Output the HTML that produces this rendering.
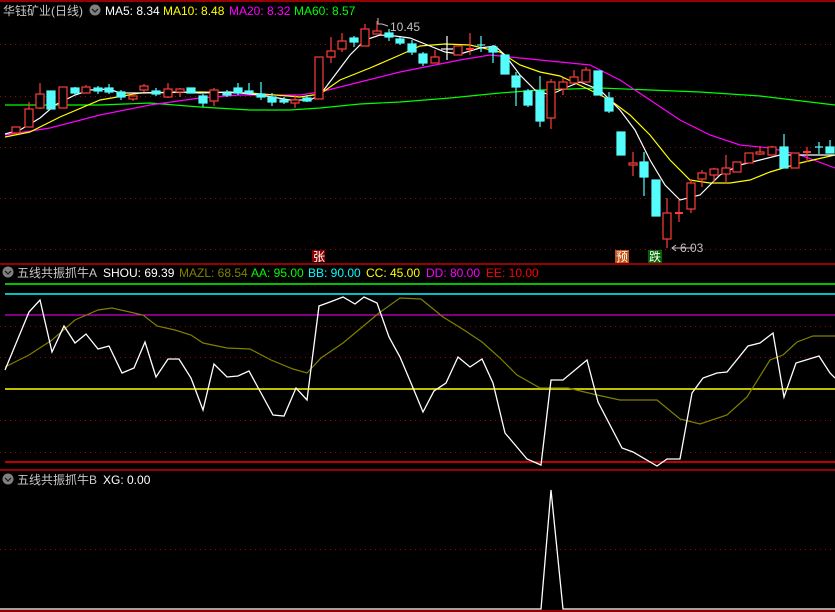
<!DOCTYPE html>
<html><head><meta charset="utf-8"><style>
html,body{margin:0;padding:0;background:#000;width:835px;height:612px;overflow:hidden}
svg{display:block}
text{font-family:"Liberation Sans","Noto Sans CJK SC",sans-serif;font-size:12px}
</style></head><body>
<svg width="835" height="612" viewBox="0 0 835 612" xmlns="http://www.w3.org/2000/svg">
<rect width="835" height="612" fill="#000"/>
<!-- borders -->
<g stroke="#c80000" stroke-width="1.5">
<line x1="0" y1="1" x2="835" y2="1"/>
<line x1="0" y1="264" x2="835" y2="264"/>
<line x1="0" y1="470" x2="835" y2="470"/>
<line x1="0" y1="611" x2="835" y2="611"/>
</g>
<!-- dotted grid -->
<g stroke="#a00000" stroke-width="1" stroke-dasharray="1,4">
<line x1="0" y1="44.5" x2="835" y2="44.5"/>
<line x1="0" y1="96.5" x2="835" y2="96.5"/>
<line x1="0" y1="147.5" x2="835" y2="147.5"/>
<line x1="0" y1="198.5" x2="835" y2="198.5"/>
<line x1="0" y1="249.5" x2="835" y2="249.5"/>
<line x1="0" y1="326.5" x2="835" y2="326.5"/>
<line x1="0" y1="357.5" x2="835" y2="357.5"/>
<line x1="0" y1="420.5" x2="835" y2="420.5"/>
<line x1="0" y1="452.5" x2="835" y2="452.5"/>
<line x1="0" y1="549.5" x2="835" y2="549.5"/>
</g>
<!-- MA lines -->
<g fill="none" stroke-width="1.2">
<polyline stroke="#00ff00" points="5,105 100,105 150,103 200,107 250,110 290,110 320,108 360,104 400,102 450,98 500,93 540,90 600,88 650,90 700,92 760,96 835,105"/>
<polyline stroke="#ff00ff" points="5,135 50,128 100,115 150,105 200,98 240,95 300,95 320,92 360,82 400,72 430,66 460,60 490,55 520,58 560,62 590,65 620,80 650,100 680,120 710,135 740,145 770,148 800,155 835,168"/>
<polyline stroke="#ffff00" points="5,137 30,132 60,117 100,100 140,93 200,92 250,93 300,97 320,94 340,80 370,68 400,55 420,46 445,44 470,45 500,52 520,65 540,72 560,76 590,90 610,100 630,115 650,135 670,160 690,180 710,183 730,183 750,180 770,172 800,163 835,155"/>
<polyline stroke="#ffffff" points="5,134 20,130 40,118 55,105 75,95 90,90 109,89 120,93 140,93 180,92 200,93 230,92 260,95 290,100 310,100 320,95 335,75 350,55 365,40 380,35 395,36 410,38 425,44 445,52 460,54 480,48 495,46 505,55 520,75 535,90 550,95 565,88 580,82 600,90 620,110 635,130 650,160 665,185 680,200 700,195 720,175 740,165 760,160 780,155 800,155 835,155"/>
</g>
<!-- red candles -->
<g stroke="#ff3c3c" fill="#000" stroke-width="1.2">
<line x1="16" y1="127" x2="16" y2="134"/><rect x="12" y="127" width="8" height="6"/>
<line x1="29" y1="102" x2="29" y2="127"/><rect x="25" y="109" width="8" height="18"/>
<line x1="40" y1="83" x2="40" y2="109"/><rect x="36" y="94" width="8" height="14"/>
<line x1="63" y1="87" x2="63" y2="108"/><rect x="59" y="87" width="8" height="21"/>
<line x1="86" y1="85" x2="86" y2="93"/><rect x="82" y="87" width="8" height="6"/>
<line x1="133" y1="94" x2="133" y2="101"/><rect x="129" y="96" width="8" height="3"/>
<line x1="144" y1="84" x2="144" y2="92"/><rect x="140" y="86" width="8" height="4"/>
<line x1="168" y1="83" x2="168" y2="98"/><rect x="164" y="89" width="8" height="8"/>
<line x1="180" y1="88" x2="180" y2="97"/><rect x="176" y="89" width="8" height="3"/>
<line x1="214" y1="88" x2="214" y2="106"/><rect x="210" y="90" width="8" height="11"/>
<line x1="295" y1="95" x2="295" y2="108"/><rect x="291" y="100" width="8" height="3"/>
<rect x="315" y="57" width="8" height="42"/>
<line x1="331" y1="37" x2="331" y2="63"/><rect x="327" y="51" width="8" height="6"/>
<line x1="342" y1="33" x2="342" y2="52"/><rect x="338" y="41" width="8" height="8"/>
<line x1="365" y1="24" x2="365" y2="46"/><rect x="361" y="29" width="8" height="17"/>
<line x1="377" y1="21" x2="377" y2="34"/><rect x="373" y="31" width="8" height="3"/>
<line x1="435" y1="50" x2="435" y2="63"/><rect x="431" y="57" width="8" height="6"/>
<rect x="454" y="46" width="8" height="9"/>
<line x1="470" y1="33" x2="470" y2="55"/><line x1="466" y1="49" x2="474" y2="49" stroke-width="2"/>
<line x1="551" y1="79" x2="551" y2="129"/><rect x="547" y="82" width="8" height="36"/>
<line x1="563" y1="78" x2="563" y2="95"/><rect x="559" y="82" width="8" height="7"/>
<line x1="574" y1="70" x2="574" y2="83"/><rect x="570" y="77" width="8" height="6"/>
<line x1="586" y1="67" x2="586" y2="82"/><rect x="582" y="70" width="8" height="12"/>
<line x1="633" y1="152" x2="633" y2="176"/><rect x="629" y="163" width="8" height="2"/>
<line x1="667" y1="198" x2="667" y2="248"/><rect x="663" y="213" width="8" height="26"/>
<line x1="679" y1="200" x2="679" y2="222"/><line x1="675" y1="213" x2="683" y2="213" stroke-width="2"/>
<line x1="691" y1="180" x2="691" y2="213"/><rect x="687" y="183" width="8" height="26"/>
<line x1="702" y1="170" x2="702" y2="187"/><rect x="698" y="173" width="8" height="6"/>
<line x1="714" y1="168" x2="714" y2="183"/><rect x="710" y="169" width="8" height="6"/>
<line x1="726" y1="155" x2="726" y2="183"/><rect x="722" y="168" width="8" height="6"/>
<rect x="733" y="162" width="8" height="10"/>
<rect x="745" y="153" width="8" height="10"/>
<line x1="760" y1="146" x2="760" y2="155"/><rect x="756" y="152" width="8" height="2"/>
<line x1="772" y1="146" x2="772" y2="155"/><rect x="768" y="147" width="8" height="8"/>
<rect x="791" y="153" width="8" height="15"/>
<line x1="807" y1="147" x2="807" y2="162"/><line x1="803" y1="152" x2="811" y2="152" stroke-width="2"/>
</g>
<!-- cyan candles -->
<g stroke="#54fcfc" fill="#54fcfc" stroke-width="1.2">
<rect x="47" y="91" width="8" height="18"/>
<line x1="75" y1="87" x2="75" y2="95"/><rect x="71" y="88" width="8" height="5"/>
<line x1="98" y1="86" x2="98" y2="94"/><rect x="94" y="88" width="8" height="3"/>
<line x1="109" y1="84" x2="109" y2="94"/><rect x="105" y="88" width="8" height="4"/>
<line x1="121" y1="90" x2="121" y2="100"/><rect x="117" y="92" width="8" height="5"/>
<line x1="156" y1="88" x2="156" y2="96"/><rect x="152" y="91" width="8" height="3"/>
<rect x="187" y="88" width="8" height="5"/>
<line x1="203" y1="94" x2="203" y2="107"/><rect x="199" y="96" width="8" height="7"/>
<line x1="227" y1="90" x2="227" y2="97"/><rect x="223" y="93" width="8" height="2"/>
<line x1="238" y1="83" x2="238" y2="95"/><rect x="234" y="88" width="8" height="5"/>
<line x1="249" y1="83" x2="249" y2="94"/><rect x="245" y="91" width="8" height="2"/>
<line x1="261" y1="82" x2="261" y2="100"/><rect x="257" y="94" width="8" height="3"/>
<line x1="272" y1="93" x2="272" y2="106"/><rect x="268" y="97" width="8" height="5"/>
<line x1="284" y1="97" x2="284" y2="104"/><rect x="280" y="100" width="8" height="2"/>
<line x1="307" y1="95" x2="307" y2="102"/><rect x="303" y="98" width="8" height="3"/>
<line x1="354" y1="36" x2="354" y2="47"/><rect x="350" y="38" width="8" height="4"/>
<line x1="389" y1="29" x2="389" y2="41"/><rect x="385" y="33" width="8" height="4"/>
<line x1="400" y1="37" x2="400" y2="45"/><rect x="396" y="39" width="8" height="4"/>
<line x1="412" y1="40" x2="412" y2="55"/><rect x="408" y="44" width="8" height="8"/>
<line x1="423" y1="52" x2="423" y2="66"/><rect x="419" y="54" width="8" height="9"/>
<line x1="481" y1="36" x2="481" y2="52"/><line x1="477" y1="45" x2="485" y2="45"/>
<line x1="493" y1="45" x2="493" y2="63"/><rect x="489" y="47" width="8" height="5"/>
<rect x="501" y="55" width="8" height="19"/>
<line x1="516" y1="72" x2="516" y2="106"/><rect x="512" y="76" width="8" height="11"/>
<line x1="528" y1="89" x2="528" y2="107"/><rect x="524" y="91" width="8" height="14"/>
<line x1="540" y1="76" x2="540" y2="127"/><rect x="536" y="91" width="8" height="30"/>
<rect x="594" y="71" width="8" height="24"/>
<line x1="609" y1="92" x2="609" y2="113"/><rect x="605" y="98" width="8" height="13"/>
<rect x="617" y="132" width="8" height="23"/>
<line x1="644" y1="152" x2="644" y2="196"/><rect x="640" y="162" width="8" height="15"/>
<rect x="652" y="180" width="8" height="36"/>
<line x1="784" y1="134" x2="784" y2="168"/><rect x="780" y="147" width="8" height="21"/>
<line x1="819" y1="142" x2="819" y2="154"/><line x1="815" y1="147" x2="823" y2="147"/>
<line x1="830" y1="140" x2="830" y2="153"/><rect x="826" y="147" width="8" height="6"/>
</g>
<g stroke="#fff" stroke-width="1.2"><line x1="447" y1="36" x2="447" y2="60"/><line x1="441" y1="49" x2="453" y2="49"/></g>
<!-- price labels -->
<g stroke="#c0c0c0" fill="none" stroke-width="1"><polyline points="378,18 378,24 382,24 388,26"/><polyline points="694,248 672,248"/><polyline points="676,245 672,248 676,251"/></g>
<text x="390" y="31" fill="#c0c0c0">10.45</text>
<text x="680" y="252" fill="#c0c0c0">6.03</text>
<!-- markers -->
<rect x="312" y="250" width="13" height="12" fill="#8c0000"/><text x="313" y="261" fill="#fff" font-size="11">张</text>
<rect x="615" y="250" width="14" height="13" fill="#c05010"/><text x="616" y="261" fill="#fff" font-size="11">预</text>
<rect x="648" y="250" width="14" height="13" fill="#006400"/><text x="649" y="261" fill="#fff" font-size="11">跌</text>
<!-- header 1 -->
<text x="3" y="15" fill="#c8c8c8" font-size="13">华钰矿业(日线)</text>
<circle cx="95" cy="10" r="5.5" fill="#808080"/><polyline points="92,9 95,12 98,9" stroke="#222" fill="none" stroke-width="1.3"/>
<text x="105" y="15" fill="#fff">MA5: 8.34</text>
<text x="163" y="15" fill="#ffff00">MA10: 8.48</text>
<text x="229" y="15" fill="#ff00ff">MA20: 8.32</text>
<text x="294" y="15" fill="#00ff00">MA60: 8.57</text>
<!-- panel 2 -->
<g stroke-width="1.5">
<line x1="5" y1="284" x2="835" y2="284" stroke="#00ff00"/>
<line x1="5" y1="294" x2="835" y2="294" stroke="#00ffff"/>
<line x1="5" y1="315" x2="835" y2="315" stroke="#ff00ff" stroke-width="1"/>
<line x1="5" y1="389" x2="835" y2="389" stroke="#ffff00"/>
<line x1="5" y1="462" x2="835" y2="462" stroke="#ff0000"/>
</g>
<polyline fill="none" stroke="#808000" stroke-width="1.2" points="5,367 29,355 52,340 75,320 98,310 112,308 143,315 157,326 175,330 191,335 203,343 227,348 250,349 271,360 293,369 307,373 321,358 343,343 361,328 379,313 400,298 421,299 443,317 464,330 482,342 500,358 517,375 540,388 568,388 597,395 620,400 657,400 680,419 700,424 727,415 747,397 770,360 783,355 797,342 813,336 835,336"/>
<polyline fill="none" stroke="#fff" stroke-width="1.3" points="5,370 29,312 40,300 52,352 64,326 75,343 86,334 98,349 109,346 122,373 134,368 145,342 156,377 168,359 179,359 191,378 203,410 214,364 227,377 238,376 249,371 261,393 273,415 284,416 296,388 307,400 319,306 330,302 343,297 355,304 364,297 377,303 389,337 400,357 411,383 423,412 434,391 446,383 458,357 470,367 482,359 493,383 505,433 527,459 541,465 551,380 563,380 587,360 598,402 622,448 633,452 657,466 667,459 680,459 692,393 703,378 717,373 727,372 748,346 760,343 773,333 784,397 796,363 819,356 830,373 835,378"/>
<circle cx="8" cy="272" r="5.5" fill="#808080"/><polyline points="5,271 8,274 11,271" stroke="#222" fill="none" stroke-width="1.3"/>
<text x="17" y="277" fill="#c8c8c8">五线共振抓牛A</text>
<text x="103" y="277" fill="#fff">SHOU: 69.39</text>
<text x="179" y="277" fill="#808000">MAZL: 68.54</text>
<text x="251" y="277" fill="#00ff00">AA: 95.00</text>
<text x="308" y="277" fill="#00ffff">BB: 90.00</text>
<text x="366" y="277" fill="#ffff00">CC: 45.00</text>
<text x="426" y="277" fill="#ff00ff">DD: 80.00</text>
<text x="486" y="277" fill="#ff0000">EE: 10.00</text>
<!-- panel 3 -->
<circle cx="8" cy="479" r="5.5" fill="#808080"/><polyline points="5,478 8,481 11,478" stroke="#222" fill="none" stroke-width="1.3"/>
<text x="17" y="484" fill="#c8c8c8">五线共振抓牛B</text>
<text x="103" y="484" fill="#fff">XG: 0.00</text>
<polyline fill="none" stroke="#fff" stroke-width="1.3" points="0,609 541,609 551,490 563,609 835,609"/>
</svg>
</body></html>
